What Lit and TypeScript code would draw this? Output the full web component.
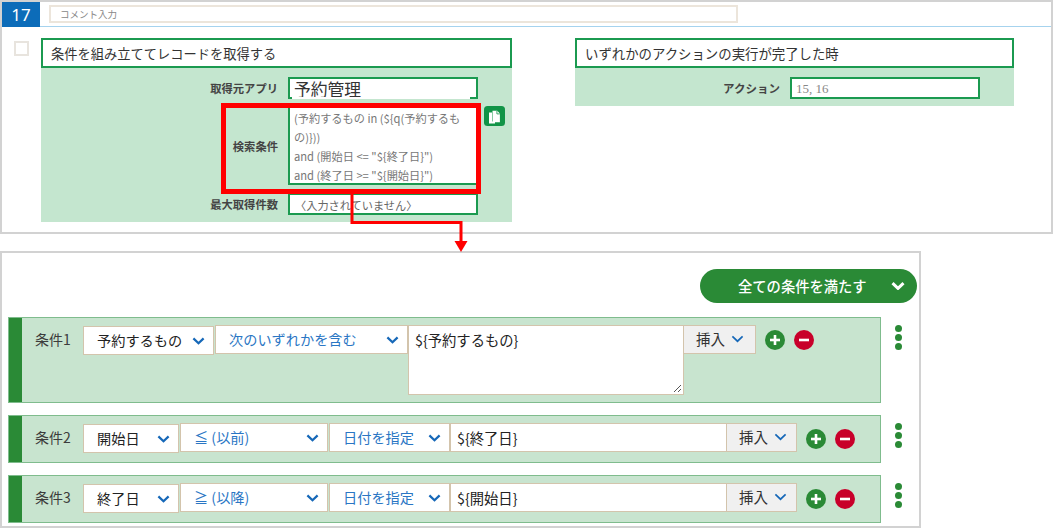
import { LitElement, html, css, svg } from "lit";
import { customElement } from "lit/decorators.js";

const chev = (thin = false) => html`<svg class="chev ${thin ? "thin" : ""}" viewBox="0 0 14 8"><path d="M1.500 1.200 7 6.400l5.500-5.200" fill="none" stroke="currentColor" stroke-width="${thin ? 1.8 : 2.4}"/></svg>`;

const circleBtn = (kind: "plus" | "minus") => html`<svg class="circ" viewBox="0 0 20 20">
  <circle cx="10" cy="10" r="10" fill="${kind === "plus" ? "#2a8a36" : "#c8002a"}"/>
  ${kind === "plus" ? svg`<path d="M10 5v10" stroke="#fff" stroke-width="2.6"/>` : ""}
  <path d="M5 10h10" stroke="#fff" stroke-width="2.6"/>
</svg>`;

@customElement("app-root")
export class AppRoot extends LitElement {
  static styles = css`
    :host { display: block; position: relative; width: 1053px; height: 528px; overflow: hidden; background: #fff; color: #333;
      font-family: "Noto Sans CJK JP", "Noto Sans", sans-serif; }
    * { box-sizing: border-box; }
    .top { height: 234px; border: 2px solid #d2d2d2; }
    .head { display: flex; align-items: center; height: 25px; border-bottom: 1px solid #a6d3ee; }
    .num { width: 38px; height: 25px; background: #0c6cb9; color: #fff; font-size: 17px; line-height: 25px; text-align: center; font-family: "Noto Sans", sans-serif; }
    .comment { width: 689px; height: 18px; margin-left: 9px; border: 2px solid #ece5db; font-size: 9.5px; line-height: 14px; padding-left: 9px; color: #888; }
    .cards { display: flex; align-items: flex-start; padding-top: 11px; }
    .check { width: 15px; height: 15px; margin: 3px 0 0 12px; border: 2px solid #e8e4de; flex: none; }
    .card { flex: none; }
    .card.a { width: 471px; margin-left: 12px; }
    .card.b { width: 439px; margin-left: 63px; }
    .title { height: 30px; border: 2px solid #1b9a50; padding-left: 8px; font-size: 13.25px; line-height: 27px; color: #333; background: #fff; }
    .card.b .title { font-size: 13.4px; }
    .body { background: #c4e6cf; padding: 9px 0 7px; display: flex; flex-direction: column; gap: 8px; }
    .field { display: flex; align-items: center; position: relative; }
    .lab { width: 237px; text-align: right; font-size: 11.3px; font-weight: 700; color: #444; flex: none; }
    .card.b .lab { width: 205px; font-size: 11.5px; }
    .box { width: 190px; margin-left: 10px; background: #fff; border: 2px solid #1b9a50; flex: none; position: relative; color: #777; }
    .s22 { height: 22px; }
    .app { font-size: 16.8px; line-height: 21px; color: #333; padding-left: 4px; }
    .app::after { content: ""; position: absolute; left: 2px; right: 6px; bottom: -2px; height: 2px; background: #fff; }
    .q { height: 78px; border-top: 0; font-size: 11.2px; line-height: 19px; padding: 2px 0 0 4px; white-space: nowrap; color: #777; }
    .none { font-size: 11.2px; line-height: 18px; padding: 1px 0 0 5px; color: #666; }
    .nums { font-family: "Liberation Serif", serif; font-size: 13px; line-height: 20px; padding-left: 4px; color: #888; }
    .copy { width: 21px; height: 20px; margin: -1px 0 0 6px; align-self: flex-start; flex: none; }

    .low { height: 277px; width: 921px; margin-top: 17px; border: 2px solid #d2d2d2; padding-top: 16px; }
    .all { width: 217px; height: 34px; margin-left: 698px; border-radius: 17px; background: #2a8a36; color: #fff; font-size: 14.3px; line-height: 33px; display: flex; padding-left: 38px; font-weight: 500; }
    .all .chev { color: #fff; width: 14px; margin: 13px 0 0 24px; }
    .all .chev path { stroke-width: 3; }
    .rows { margin: 14px 0 0 6px; display: flex; flex-direction: column; gap: 12px; }
    .wrap { display: flex; align-items: flex-start; }
    .row { width: 873px; height: 48px; background: #c8e4cf; border: 1px solid #7fbc8d; display: flex; align-items: flex-start; padding-top: 7px; }
    .row.tall { height: 86px; }
    .stripe { width: 13px; margin: -7px 13px 0 0; align-self: stretch; background: #2a8a36; flex: none; }
    .name { width: 48px; font-size: 14px; line-height: 29px; color: #3c3c3c; flex: none; }
    .ctl { height: 29px; background: #fff; border: 1px solid #d3c4ac; font-size: 14.2px; line-height: 27px; display: flex; justify-content: space-between; align-items: center; flex: none; white-space: nowrap; }
    .sel { margin-top: 1px; padding: 0 8px 0 13px; color: #222; }
    .blue { color: #2a76c4; padding: 0 8px 0 13px; margin-left: 1px; margin-top: 0; }
    .chev { width: 13px; height: 8px; color: #1668b8; flex: none; display: block; }
    .area { width: 276px; height: 70px; padding: 0 6px; color: #222; align-items: flex-start; position: relative; font-size: 14.3px; }
    .inp { width: 277px; padding: 0 6px; color: #222; font-size: 14.3px; }
    .ins { background: #f0f0f0; color: #333; padding: 0 11px 2px 12px; justify-content: flex-start; gap: 6px; border-left: 0; font-size: 14.5px; }
    .grip { position: absolute; right: 1px; bottom: 1px; width: 9px; height: 9px; }
    .circ { width: 20px; height: 20px; flex: none; margin: 6px 0 0 9px; display: block; }
    .tall .circ { margin-top: 5px; }
    .dots { display: flex; flex-direction: column; gap: 2px; margin: 8px 0 0 14px; }
    .dots i { width: 7px; height: 7px; border-radius: 50%; background: #2a8a36; display: block; }
    .red { position: absolute; left: 221px; top: 103px; width: 260px; height: 91px; border: 5px solid #f00; pointer-events: none; }
    .arrow { position: absolute; left: 340px; top: 190px; width: 140px; height: 66px; pointer-events: none; }
  `;

  private dots() { return html`<div class="dots"><i></i><i></i><i></i></div>`; }
  private sel(t: string, w: number, blue = false) {
    return html`<div class="ctl ${blue ? "blue" : "sel"}" style="width:${w}px"><span>${t}</span>${chev()}</div>`;
  }
  private ins(w: number) { return html`<div class="ctl ins" style="width:${w}px"><span>挿入</span>${chev(true)}</div>`; }

  render() {
    return html`
      <section class="top">
        <div class="head"><div class="num">17</div><div class="comment">コメント入力</div></div>
        <div class="cards">
          <div class="check"></div>
          <div class="card a">
            <div class="title">条件を組み立ててレコードを取得する</div>
            <div class="body">
              <div class="field"><div class="lab">取得元アプリ</div><div class="box s22 app">予約管理</div></div>
              <div class="field"><div class="lab">検索条件</div>
                <div class="box q">
                  <div>(予約するもの in (\${q(予約するも</div><div>の)}))</div>
                  <div>and (開始日 &lt;= "\${終了日}")</div><div>and (終了日 &gt;= "\${開始日}")</div>
                </div>
                <svg class="copy" viewBox="0 0 21 20">
                  <rect width="21" height="20" rx="3.500" fill="#119447"/>
                  <path d="M5 6.500h3v9h3v2H5z" fill="#fff"/>
                  <path d="M8.500 4.800h4.700l2.700 2.800v8.700H8.500z" fill="#fff"/>
                  <path d="M12.900 5v2.900h2.900" fill="none" stroke="#119447" stroke-width=".8"/>
                </svg>
              </div>
              <div class="field"><div class="lab">最大取得件数</div><div class="box s22 none">〈入力されていません〉</div></div>
            </div>
          </div>
          <div class="card b">
            <div class="title">いずれかのアクションの実行が完了した時</div>
            <div class="body">
              <div class="field"><div class="lab">アクション</div><div class="box s22 nums">15, 16</div></div>
            </div>
          </div>
        </div>
      </section>
      <section class="low">
        <div class="all"><span>全ての条件を満たす</span>${chev()}</div>
        <div class="rows">
          <div class="wrap">
            <div class="row tall">
              <div class="stripe"></div><div class="name">条件1</div>
              ${this.sel("予約するもの", 131)}${this.sel("次のいずれかを含む", 193, true)}
              <div class="ctl area"><span>\${予約するもの}</span>
                <svg class="grip" viewBox="0 0 9 9"><path d="M1 8 8 1M5 8l3-3" stroke="#555" fill="none"/></svg></div>
              ${this.ins(72)}${circleBtn("plus")}${circleBtn("minus")}
            </div>
            ${this.dots()}
          </div>
          <div class="wrap">
            <div class="row">
              <div class="stripe"></div><div class="name">条件2</div>
              ${this.sel("開始日", 96)}${this.sel("≦ (以前)", 148, true)}${this.sel("日付を指定", 121, true)}
              <div class="ctl inp"><span>\${終了日}</span></div>
              ${this.ins(70)}${circleBtn("plus")}${circleBtn("minus")}
            </div>
            ${this.dots()}
          </div>
          <div class="wrap">
            <div class="row">
              <div class="stripe"></div><div class="name">条件3</div>
              ${this.sel("終了日", 96)}${this.sel("≧ (以降)", 148, true)}${this.sel("日付を指定", 121, true)}
              <div class="ctl inp"><span>\${開始日}</span></div>
              ${this.ins(70)}${circleBtn("plus")}${circleBtn("minus")}
            </div>
            ${this.dots()}
          </div>
        </div>
      </section>
      <div class="red"></div>
      <svg class="arrow" viewBox="0 0 140 66">
        <path d="M12 3v29.500h109v20" fill="none" stroke="#f00" stroke-width="3"/>
        <path d="M114.500 51h13l-6.500 11z" fill="#f00"/>
      </svg>
    `;
  }
}
